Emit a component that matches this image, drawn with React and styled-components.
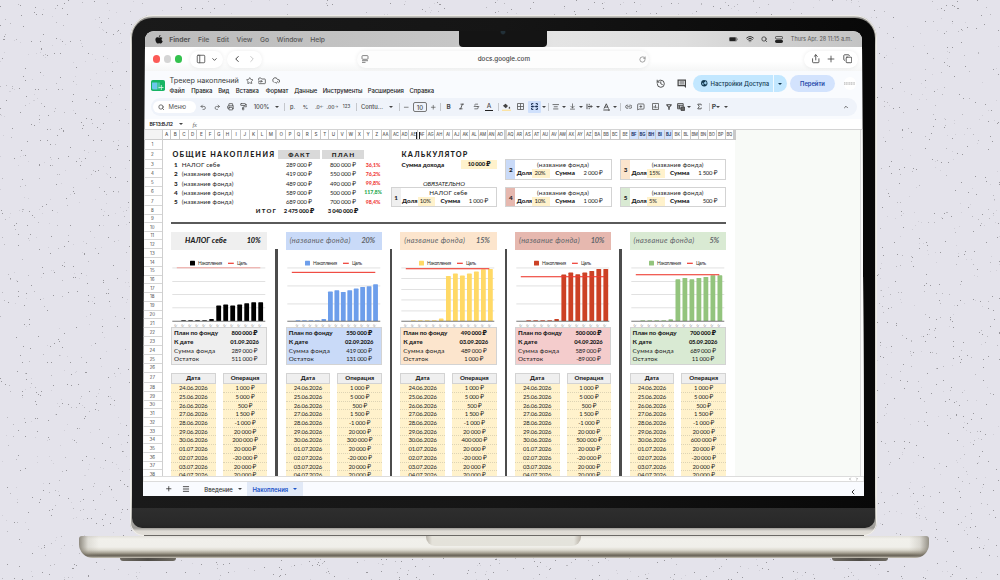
import React from "react";
import styled, { createGlobalStyle, css } from "styled-components";
import {
  Search, Undo2, Redo2, Printer, PaintRoller, Minus, Plus, Strikethrough, Italic,
  AlignCenter, ArrowDownToLine, Link2, MessageSquarePlus, Sigma,
  ChevronUp, ChevronDown, ChevronLeft, ChevronRight, Star, FolderInput, CloudCheck, History,
  PanelLeft, RotateCw, Share, Copy, Wifi, Menu,
} from "lucide-react";

const Global = createGlobalStyle`
  * { box-sizing: border-box; }
  html, body { margin: 0; width: 1000px; height: 580px; overflow: hidden; background: #e4e3eb; }
  svg { display: block; flex: none; }
`;

const UI = `Inter, "Liberation Sans", sans-serif`;
const SHEET = `Lato, Inter, sans-serif`;

/* ---------- backdrop and laptop ---------- */

const Stage = styled.main`
  position: relative;
  width: 1000px;
  height: 580px;
  padding-top: 15px;
  overflow: hidden;
  background: #e4e3eb;
  font-family: ${UI};
  color: #222;
`;

const Speckles = styled.svg`
  position: absolute;
  inset: 0;
`;

const Laptop = styled.div`
  position: relative;
  display: flex;
  flex-direction: column;
  align-items: center;
  width: 850px;
  margin-left: 78.5px;
`;

const Lid = styled.div`
  width: 747px;
  height: 521px;
  padding: 3px 2px 8px 2px;
  border-radius: 23px 23px 14px 14px;
  background: linear-gradient(180deg, #f3f2ee 0, #8d8c88 3px, #cfcdc7 30px, #dedcd6 480px, #9c9a96 513px, #dedbd5 516px, #e2dfd8 521px);
  box-shadow: inset 0 0 0 1px #f0eeea;
`;

const Bezel = styled.div`
  height: 510px;
  padding: 13px 11px 32px 11px;
  border-radius: 20px 20px 10px 10px;
  background:
    linear-gradient(180deg, transparent 489.5px, #2e2e2e 490px, #292929 506px, #242424 510px),
    linear-gradient(90deg, #1a1a1a, #151515 50%, #080808);
`;

const Screen = styled.div`
  display: flex;
  flex-direction: column;
  width: 721px;
  height: 465px;
  background: #fff;
  clip-path: path("M2 10 Q2 0 12 0 H709 Q719 0 719 10 L721 465 H0 Z");
`;

const Hinge = styled.div`
  width: 720px;
  height: 1px;
  margin-top: -1px;
  background: #6b6965;
`;

const Base = styled.div`
  position: relative;
  display: flex;
  justify-content: center;
  width: 850px;
  height: 21.5px;
  border-radius: 3px 3px 14px 14px;
  background:
    linear-gradient(90deg, rgba(110, 104, 92, 0.75), rgba(150, 144, 132, 0.2) 9px, transparent 20px, transparent 830px, rgba(150, 144, 132, 0.25) 841px, rgba(110, 104, 92, 0.7)),
    linear-gradient(180deg, #e2e0da 0, #f1f0eb 3px, #f0efea 11px, #dddad0 14px, #a5a092 17px, #716b5f 19px, #6b665b 20px, #b7b2a6 21.5px);
`;

const Scoop = styled.div`
  width: 155px;
  height: 10px;
  border-radius: 0 0 9px 9px;
  background: linear-gradient(90deg, #b8b3a9, #e4e2da 6px, #e4e3dc 148px, #b8b1a6);
`;

const Feet = styled.div`
  display: flex;
  justify-content: space-between;
  width: 768px;
`;

const Foot = styled.div`
  width: 56px;
  height: 3.3px;
  border-radius: 0 0 5px 5px;
  background: linear-gradient(90deg, #6e6a62, #4e4b46 50%, #6e6a62);
`;

const Gap = styled.i`
  flex: none;
  width: ${(p) => p.$w}px;
`;

/* ---------- mac menu bar ---------- */

const MacBar = styled.div`
  position: relative;
  display: flex;
  align-items: center;
  flex: none;
  height: 16px;
  padding: 0 12px;
  background: linear-gradient(90deg, #bcbcbc, #c6c6c6 43%, #e4e4e4 57%, #dedede 75%, #c3c3c3);
  font-size: 6.75px;
  color: #555;
`;

const MacItem = styled.span`
  flex: none;
  width: ${(p) => p.$w}px;
  font-weight: ${(p) => (p.$bold ? 700 : 500)};
  white-space: nowrap;
`;

const MacStatus = styled.div`
  display: flex;
  align-items: center;
  gap: 7.5px;
  margin-left: auto;
  font-size: 5.5px;
  white-space: nowrap;
`;

const Notch = styled.div`
  position: absolute;
  left: 316px;
  top: -1px;
  width: 88px;
  height: 16.5px;
  border-radius: 0 0 4px 4px;
  background: radial-gradient(circle at 44px 2px, #223038 1.6px, #141414 3px);
`;

/* ---------- browser bar ---------- */

const BrowserBar = styled.div`
  display: flex;
  align-items: center;
  flex: none;
  height: 24px;
  padding: 0 4px 0 9.5px;
  background: linear-gradient(180deg, #fff 60%, #f5f6f6);
`;

const Light = styled.i`
  width: 7.4px;
  height: 7.4px;
  margin-right: 3.9px;
  border-radius: 50%;
  background: ${(p) => p.$c};
`;

const Pill = styled.div`
  display: flex;
  align-items: center;
  justify-content: space-evenly;
  flex: none;
  width: ${(p) => p.$w}px;
  height: 17px;
  margin-left: ${(p) => p.$ml || 0}px;
  border-radius: 9px;
  background: #fff;
  box-shadow: 0 0 4px rgba(0, 0, 0, 0.08);
  color: #444;
`;

const Url = styled(Pill)`
  justify-content: space-between;
  padding: 0 3px 0 4px;
  font-size: 6.3px;
  font-weight: 500;
  background: #fdfdfd;
`;

/* ---------- document header ---------- */

const DocHeader = styled.header`
  display: flex;
  flex: none;
  height: 27px;
  padding: 0 8px;
  background: #f9fbfe;
`;

const DocLogo = styled.svg`
  margin-top: 8.5px;
`;

const Titles = styled.div`
  display: flex;
  flex-direction: column;
  margin-left: 4.5px;
  padding-top: 3.5px;
`;

const TitleRow = styled.div`
  display: flex;
  align-items: center;
  height: 12px;
  gap: 5.2px;
  color: #3c3c3c;
`;

const Title = styled.span`
  width: 70px;
  font-size: 7.25px;
  white-space: nowrap;
  margin-right: 1px;
`;

const DocMenu = styled.nav`
  display: flex;
  height: 7px;
  font-size: 5.9px;
  line-height: 7px;
  font-weight: 500;
  letter-spacing: -0.04px;
  color: #222;
`;

const DocMenuItem = styled.span`
  width: ${(p) => p.$w}px;
  white-space: nowrap;
`;

const HeaderActions = styled.div`
  display: flex;
  align-items: center;
  margin-left: auto;
  height: 25px;
  color: #444;
`;

const ShareButton = styled.div`
  display: flex;
  align-items: center;
  width: 94px;
  height: 17px;
  margin-left: 7px;
  padding-left: 8px;
  gap: 3px;
  border-radius: 9px;
  background: linear-gradient(90deg, #c2e7ff 79.6px, #f2faff 79.6px, #f2faff 80.6px, #c2e7ff 80.6px);
  color: #12384f;
  font-size: 5.95px;
  font-weight: 500;
  white-space: nowrap;
`;

const GoButton = styled.div`
  display: flex;
  align-items: center;
  justify-content: center;
  width: 45px;
  height: 17px;
  margin: 0 8.5px 0 3px;
  border-radius: 9px;
  background: #d3e3fd;
  color: #2347a8;
  font-size: 5.8px;
  font-weight: 600;
`;

const Avatar = styled.div`
  display: flex;
  align-items: center;
  justify-content: center;
  width: 12.5px;
  height: 12.5px;
  border-radius: 50%;
  background: #fff;
`;

/* ---------- toolbar ---------- */

const ToolbarWrap = styled.div`
  flex: none;
  height: 21px;
  padding: 0 7px 0 8px;
  background: #f9fbfe;
`;

const Toolbar = styled.div`
  display: flex;
  align-items: center;
  height: 17.5px;
  padding-left: 2px;
  border-radius: 9px;
  background: #eff3fa;
  color: #4a4a4a;
`;

const MenuSearch = styled.div`
  display: flex;
  align-items: center;
  flex: none;
  gap: 4px;
  width: 43px;
  height: 12.5px;
  padding-left: 5px;
  border-radius: 7px;
  background: #fff;
  font-size: 6px;
  color: #555;
`;

const Slot = styled.div`
  display: flex;
  align-items: center;
  justify-content: center;
  flex: none;
  width: ${(p) => p.$w}px;
  height: 12.5px;
  margin-left: ${(p) => (p.$end ? "auto" : 0)};
  font-size: ${(p) => p.$fs || 5.8}px;
  font-weight: ${(p) => (p.$b ? 700 : 500)};
  white-space: nowrap;
  border-radius: 1px;
  ${(p) => p.$on && css`background: #cfe0fc; color: #14315f;`}
`;

const Divider = styled.i`
  width: 0.7px;
  height: 8.5px;
  background: #c4c7cc;
`;

const Caret = styled.i`
  width: 0;
  height: 0;
  border: 2px solid transparent;
  border-top: 2px solid ${(p) => p.$c || "#444"};
  border-bottom: 0;
`;

const SizeBox = styled.div`
  width: 14.5px;
  height: 10.5px;
  border: 0.8px solid #777;
  border-radius: 2px;
  text-align: center;
  font-size: 6px;
  line-height: 9px;
`;

const Underlined = styled.span`
  border-bottom: 1.7px solid ${(p) => p.$c};
  padding: 0 1.8px;
  line-height: 7.5px;
`;

/* ---------- formula bar and sheet ---------- */

const FormulaBar = styled.div`
  display: flex;
  align-items: center;
  flex: none;
  height: 11.2px;
  padding-left: 6.5px;
  border-bottom: 0.8px solid #d4d4d4;
  background: #fff;
  font-size: 5.2px;
  font-weight: 600;
  letter-spacing: -0.25px;
  color: #222;
`;

const NameBox = styled.span`
  width: 29.5px;
`;

const Fx = styled.span`
  margin-left: 9.5px;
  font: italic 6.5px "Liberation Serif", serif;
  color: #666;
`;

const Sheet = styled.div`
  position: relative;
  display: flex;
  flex: none;
  height: 346.3px;
  overflow: hidden;
  background: linear-gradient(90deg, #fff 591.5px, #f8faf7 591.8px);
`;

const RowNumbers = styled.div`
  flex: none;
  width: 19.7px;
  border-right: 1px solid #cfcfcf;
`;

const Corner = styled.div`
  height: 9.8px;
  background: #f4f4f4;
  border-bottom: 1px solid #ccc;
`;

const RowNumber = styled.div`
  display: flex;
  align-items: center;
  justify-content: center;
  height: ${(p) => p.$h}px;
  padding-top: 0.6px;
  border-bottom: 0.7px solid #d6d6d6;
  font-size: 4.4px;
  color: #444;
`;

const SheetBody = styled.div`
  width: 573px;
`;

const Letters = styled.div`
  display: flex;
  height: 9.8px;
  border-bottom: 1px solid #c6c6c6;
  background: #c9c9c9;
`;

const LetterGroup = styled.div`
  display: flex;
  flex: none;
  width: 114.65px;
  padding-right: 1.7px;
  background: #d5d5d5;
  &:last-child { width: 113px; padding-right: 0; }
`;

const Letter = styled.div`
  flex: none;
  width: 8.69px;
  border-right: 0.8px solid #c9c9c9;
  background: ${(p) => (p.$on ? "#d3e3fd" : "#fff")};
  color: ${(p) => (p.$on ? "#14315f" : "#555")};
  font-size: ${(p) => (p.$two ? 4.2 : 4.6)}px;
  font-weight: ${(p) => (p.$on ? 700 : 500)};
  line-height: 9.8px;
  text-align: center;
  letter-spacing: -0.1px;
  overflow: hidden;
`;

const ColumnHandle = styled.div`
  position: absolute;
  left: 273px;
  top: 1.5px;
  width: 4px;
  height: 7px;
  border: solid #222;
  border-width: 0 1px;
`;

const Content = styled.div`
  display: flex;
  flex-direction: column;
  height: 336.5px;
  padding-left: 8.3px;
  font-family: ${SHEET};
  font-size: 6.3px;
  color: #1d1d1d;
  white-space: nowrap;
`;

const TopBlock = styled.div`
  display: flex;
  flex: none;
  height: 84.2px;
  width: 555.5px;
  padding-top: 9.7px;
  border-bottom: 2px solid #5a5a5a;
`;

const Num = styled.span`
  font-size: 5.9px;
  letter-spacing: -0.18px;
  word-spacing: -0.15px;
`;

const Summary = styled.div`
  width: 220px;
`;

const SummaryRow = styled.div`
  display: grid;
  grid-template-columns: 107px 42px 2px 42px 18px;
  align-items: center;
  height: ${(p) => p.$h || 9.25}px;
  padding-top: ${(p) => (p.$h ? 0 : 0.8)}px;
  text-align: center;
  font-weight: ${(p) => (p.$bold ? 900 : 400)};
`;

const Heading = styled.span`
  padding-left: 1.5px;
  font-size: 7.2px;
  font-weight: 900;
  letter-spacing: ${(p) => p.$ls}px;
  text-align: left;
`;

const HeadCell = styled.span`
  height: 9.3px;
  padding-left: 1px;
  background: #d9d9d9;
  font-size: 6.4px;
  line-height: 9.3px;
  font-weight: 900;
  letter-spacing: 1.1px;
`;

const FundName = styled.span`
  padding-left: 3px;
  text-align: left;
  letter-spacing: 0.14px;
  b { display: inline-block; width: 7.7px; font-weight: 900; }
`;

const TotalLabel = styled.span`
  text-align: right;
  padding-right: 1px;
  font-size: 6.1px;
  letter-spacing: 1.15px;
  font-weight: 900;
`;

const Percent = styled.span`
  font-size: 5.3px;
  font-weight: 900;
  letter-spacing: -0.05px;
  color: ${(p) => (p.$up ? "#1fa84f" : "#f03a36")};
`;

const Calculator = styled.div`
  width: 106.5px;
  margin-left: 0.4px;
`;

const CalcHead = styled.div`
  height: 10px;
  padding-left: 9.5px;
  line-height: 10px;
`;

const Income = styled.div`
  display: flex;
  align-items: center;
  justify-content: space-between;
  height: 9.9px;
  padding-left: 11px;
  font-weight: 900;
`;

const IncomeValue = styled(Num)`
  width: 36px;
  height: 8.5px;
  line-height: 8.5px;
  text-align: center;
  background: #fff2cc;
`;

const Required = styled.div`
  height: 17.3px;
  padding-top: 9px;
  line-height: 9px;
  text-align: center;
  font-style: italic;
  letter-spacing: -0.1px;
`;

const ShareCard = styled.div`
  display: grid;
  grid-template-columns: 9px 1fr;
  width: 106.5px;
  height: 20.5px;
  border: 1.2px solid #d3d3d3;
  background: #fff;
`;

const CardNumber = styled.div`
  display: flex;
  align-items: center;
  justify-content: center;
  background: ${(p) => p.$c};
  font-weight: 900;
`;

const CardTop = styled.div`
  height: 9.3px;
  line-height: 9.9px;
  text-align: center;
  letter-spacing: 0.14px;
`;

const CardLine = styled.div`
  display: flex;
  height: 8.8px;
  line-height: 8.8px;
  padding-left: 1.5px;
  b { font-weight: 900; }
`;

const ShareLabel = styled.b`
  width: 15.6px;
  letter-spacing: -0.1px;
`;

const CardShare = styled(Num)`
  width: 17.5px;
  margin-right: 5.3px;
  padding-left: 2px;
  background: #fff2cc;
`;

const CardSum = styled(Num)`
  margin-left: auto;
  padding-right: 8px;
`;

const Cards = styled.div`
  display: grid;
  grid-template-columns: 106.5px 106.5px;
  grid-auto-rows: 20.5px;
  gap: 7.2px 8.2px;
  align-content: start;
  padding: 9.5px 0 0 8.2px;
`;

const Funds = styled.div`
  display: flex;
  flex: none;
  padding-top: 7.5px;
`;

const Fund = styled.section`
  position: relative;
  display: flex;
  flex-direction: column;
  flex: none;
  width: 114.65px;
  padding-right: 18.25px;
`;

const FundTitle = styled.div`
  display: flex;
  align-items: center;
  justify-content: space-between;
  flex: none;
  height: 18px;
  padding: 0 7px 0 ${(p) => (p.$bold ? 14 : 4)}px;
  background: ${(p) => p.$c};
  font-size: 7.4px;
  font-style: italic;
  font-weight: ${(p) => (p.$bold ? 900 : 400)};
  letter-spacing: ${(p) => (p.$bold ? 0.08 : 0.32)}px;
  color: ${(p) => (p.$bold ? "#1d1d1d" : "#62656a")};
  b { font-weight: ${(p) => (p.$bold ? 900 : 700)}; letter-spacing: -0.2px; }
`;

const FundRule = styled.div`
  position: absolute;
  right: 8px;
  top: 17.5px;
  width: 2.2px;
  height: 230px;
  background: #4c4c4c;
`;

const ChartSvg = styled.svg`
  width: 96.4px;
  height: 77.7px;
`;

const PlanBox = styled.div`
  flex: none;
  height: 38px;
  padding: 0.6px 0 0 2px;
  border: 1.1px solid #d3d3d3;
  background: ${(p) => p.$c};
`;

const PlanRow = styled.div`
  display: grid;
  grid-template-columns: 47px 47px;
  height: 8.85px;
  line-height: 8.85px;
  font-weight: ${(p) => (p.$bold ? 900 : 400)};
  letter-spacing: ${(p) => (p.$bold ? -0.05 : 0.16)}px;
`;

const PlanValue = styled(Num)`
  text-align: center;
`;

const Ledger = styled.div`
  display: grid;
  grid-template-columns: 44.6px 44.6px;
  justify-content: space-between;
  padding-top: 8px;
`;

const LedgerHead = styled.div`
  height: 10.8px;
  border: 1.1px solid #d3d3d3;
  background: #efefef;
  font-size: 6.1px;
  font-weight: 900;
  line-height: 8.8px;
  text-align: center;
`;

const LedgerCell = styled(Num)`
  height: 8.72px;
  line-height: 8.9px;
  border-bottom: 0.6px dotted #ddd3b4;
  background: #fff2cc;
  text-align: center;
`;

const SideScroll = styled.div`
  position: absolute;
  right: 0;
  top: 0;
  width: 4.5px;
  height: 100%;
  border-left: 0.8px solid #dcdcdc;
  background: #fafafa;
`;

const BottomScroll = styled.div`
  display: flex;
  justify-content: flex-end;
  gap: 3px;
  flex: none;
  height: 5.8px;
  padding-right: 5px;
  border: solid #dcdcdc;
  border-width: 1px 0 0.8px;
  color: #888;
`;

const Tabs = styled.footer`
  display: flex;
  align-items: center;
  flex: 1;
  background: #f9fbff;
  font-size: 5.9px;
  font-weight: 500;
  color: #333;
`;

const Tab = styled.div`
  display: flex;
  align-items: center;
  justify-content: center;
  gap: 5px;
  width: ${(p) => p.$w}px;
  height: 100%;
  white-space: nowrap;
  ${(p) => p.$on && css`background: #e1e9f7; color: #1a52c8; font-weight: 600;`}
`;

const TabsToggle = styled(ChevronLeft)`
  margin: 5px 7px 0 auto;
`;

/* ---------- data ---------- */

const ROW_HEIGHTS = [
  9.7, 10, 9.2, 9.2, 9.2, 9.2, 9.6, 8.6, 8.6, 8.4, 8.6, 9, 8.7, 8.7, 9, 8.6, 8.7, 8.7, 9, 8.6, 8.7, 9, 9, 9, 9, 8.7, 10.8,
  8.72, 8.72, 8.72, 8.72, 8.72, 8.72, 8.72, 8.72, 8.72, 8.72, 8.72,
];

const LETTERS = [
  "A B C D E F G H I J K L M",
  "O P Q R S T U V W X Y Z AA",
  "AC AD AE AF AG AH AI AJ AK AL AM AN AO",
  "AQ AR AS AT AU AV AW AX AY AZ BA BB BC",
  "BE BF BG BH BI BJ BK BL BM BN BO BP BQ",
].map((g) => g.split(" "));
const SELECTED = ["BF", "BG", "BH", "BI", "BJ"];

const NAME = "(название фонда)";

const FUNDS = [
  {
    name: "НАЛОГ себе", share: "10%", plan: "800 000 ₽", date: "01.09.2026", sum: "289 000 ₽", left: "511 000 ₽", pct: "36,1%", big: "200 000 ₽",
    head: "#efefef", box: "#efefef", bar: "#000", grid: [17.6, 31, 44, 57.5], goal: 18, thin: true,
    x0: 45.3, pitch: 7, tops: [55.6, 54.6, 55.6, 54.6, 53.3, 52.3, 52.3], dot: 69,
  },
  {
    name: NAME, share: "20%", plan: "550 000 ₽", date: "02.09.2026", sum: "419 000 ₽", left: "131 000 ₽", pct: "76,2%", big: "300 000 ₽",
    head: "#c9daf8", box: "#c9daf8", bar: "#6d9eeb", grid: [17.6, 35.6, 53.6], goal: 22.3,
    x0: 42, pitch: 6.45, tops: [41.6, 40.3, 42, 40.3, 38.6, 37, 36.3, 34.3], dot: 69,
  },
  {
    name: NAME, share: "15%", plan: "490 000 ₽", date: "03.09.2026", sum: "489 000 ₽", left: "1 000 ₽", pct: "99,8%", big: "400 000 ₽",
    head: "#fce5cd", box: "#fce5cd", bar: "#ffd966", grid: [17.6, 28.3, 39, 49.6, 60.6], goal: 18.6,
    x0: 46, pitch: 7, tops: [26, 23.6, 25.6, 23.6, 21.6, 19.3, 19], dot: 68.6,
  },
  {
    name: NAME, share: "10%", plan: "500 000 ₽", date: "04.09.2026", sum: "589 000 ₽", left: "-89 000 ₽", pct: "117,8%", big: "500 000 ₽",
    head: "#e6b8af", box: "#f4cccc", bar: "#cc4125", grid: [17.6, 35.6, 53.6], goal: 26.6,
    x0: 46.4, pitch: 7, tops: [24.6, 22.6, 24.3, 22.6, 21, 19, 19], dot: 69,
  },
  {
    name: NAME, share: "5%", plan: "700 000 ₽", date: "05.09.2026", sum: "689 000 ₽", left: "11 000 ₽", pct: "98,4%", big: "600 000 ₽",
    head: "#d9ead3", box: "#d9ead3", bar: "#93c47d", grid: [17.6, 31, 44, 57.5], goal: 24.6,
    x0: 45.5, pitch: 7, tops: [29.3, 28, 29.3, 28, 27, 25.3, 25.3], dot: 69.3,
  },
];

const OPERATIONS = [
  ["24.06.2026", "1 000 ₽"], ["25.06.2026", "5 000 ₽"], ["26.06.2026", "500 ₽"], ["27.06.2026", "1 500 ₽"],
  ["28.06.2026", "-1 000 ₽"], ["29.06.2026", "20 000 ₽"], ["30.06.2026", null], ["01.07.2026", "20 000 ₽"],
  ["02.07.2026", "-20 000 ₽"], ["03.07.2026", "20 000 ₽"], ["04.07.2026", "20 000 ₽"],
];

const CARDS = [
  { n: 2, name: NAME, share: "20%", sum: "2 000 ₽", c: "#c9daf8" },
  { n: 3, name: NAME, share: "15%", sum: "1 500 ₽", c: "#fce5cd" },
  { n: 4, name: NAME, share: "10%", sum: "1 000 ₽", c: "#e6b8af" },
  { n: 5, name: NAME, share: "5%", sum: "500 ₽", c: "#d9ead3" },
];

/* Deterministic speckle pattern split into a few tones. */
function speckle(count, seed) {
  let s = seed;
  const next = () => {
    s = (s * 1664525 + 1013904223) % 4294967296;
    return s / 4294967296;
  };
  let d = "";
  for (let i = 0; i < count; i++) d += `M${Math.floor(next() * 1000)} ${Math.floor(next() * 580)}h1v1h-1z`;
  return d;
}
const DOTS = [
  ["#99989d", speckle(2300, 11)],
  ["#b9b8be", speckle(1500, 77)],
  ["#d0cfd7", speckle(1500, 303)],
];

/* ---------- parts ---------- */

function Chart({ f }) {
  const count = f.tops.length;
  const small = f.x0 - f.pitch;
  return (
    <ChartSvg viewBox="0 0 96.4 77.7">
      <rect x="19" y="10.8" width="5" height="4.8" rx="0.5" fill={f.bar} />
      <text x="27" y="15" fontSize="4.8" fill="#333" textLength="24">Накопления</text>
      <rect x="57" y="12.7" width="5.8" height="1.2" fill="#ee3a30" />
      <text x="66" y="15" fontSize="4.8" fill="#333" textLength="10">Цель</text>
      {f.grid.map((y) => <rect key={y} x="1.3" y={y} width="93" height="0.7" fill="#d4d4d4" />)}
      {f.tops.map((t, i) => (
        <rect key={i} x={f.x0 + i * f.pitch} y={t} width="4.8" height={71 - t} rx="0.6" fill={f.bar} />
      ))}
      <rect x={small} y={f.dot} width="4.5" height={71 - f.dot} rx="0.6" fill={f.bar} />
      {[2, 3, 4, 5].map((k) => (
        <rect key={k} x={f.x0 - k * f.pitch} y="70.3" width="4.5" height="0.7" fill={f.bar} />
      ))}
      <rect x="1.3" y="70.8" width="93" height="0.8" fill="#555" />
      <rect x="5.8" y={f.goal - 0.5} width="83.5" height={f.thin ? 0.7 : 1.2} fill="#ee3a30" opacity={f.thin ? 0.6 : 0.9} />
      {Array.from({ length: 13 }, (_, i) => {
        const x = f.x0 + (count - 1 - i) * f.pitch + 1.2;
        return x > 2 ? <text key={i} fontSize="3" fill="#555" transform={`translate(${x} 77) rotate(-45)`}>0..</text> : null;
      })}
    </ChartSvg>
  );
}

function Card({ n, name, share, sum, c }) {
  return (
    <ShareCard>
      <CardNumber $c={c}>{n}</CardNumber>
      <div>
        <CardTop>{name}</CardTop>
        <CardLine>
          <ShareLabel>Доля</ShareLabel>
          <CardShare>{share}</CardShare>
          <b>Сумма</b>
          <CardSum>{sum}</CardSum>
        </CardLine>
      </div>
    </ShareCard>
  );
}

const Sep = ({ w }) => <Slot $w={w}><Divider /></Slot>;
const Drop = ({ w }) => <Slot $w={w}><Caret /></Slot>;

function Tools() {
  const i = { size: 7.5, strokeWidth: 2.4 };
  return (
    <Toolbar>
      <MenuSearch><Search size={6.5} strokeWidth={3} />Меню</MenuSearch>
      <Slot $w={14}><Undo2 {...i} size={6.5} /></Slot>
      <Slot $w={14}><Redo2 {...i} size={6.5} /></Slot>
      <Slot $w={12.5}><Printer {...i} /></Slot>
      <Slot $w={13.5}><PaintRoller {...i} /></Slot>
      <Slot $w={23}>100%</Slot>
      <Drop w={7} />
      <Sep w={8} />
      <Slot $w={9} $fs={5.6}>р.</Slot>
      <Slot $w={17} $fs={5.4}>%</Slot>
      <Slot $w={11} $fs={5}>.0<sub>←</sub></Slot>
      <Slot $w={15} $fs={5}>.00<sub>→</sub></Slot>
      <Slot $w={13} $fs={4.4}>123</Slot>
      <Sep w={6} />
      <Slot $w={26}>Contu...</Slot>
      <Drop w={12} />
      <Sep w={5} />
      <Slot $w={9}><Minus {...i} size={6.5} /></Slot>
      <Slot $w={18}><SizeBox>10</SizeBox></Slot>
      <Slot $w={8}><Plus {...i} size={6.5} /></Slot>
      <Sep w={7} />
      <Slot $w={9} $b $fs={6.4}>B</Slot>
      <Slot $w={17}><Italic {...i} size={7} strokeWidth={3} /></Slot>
      <Slot $w={12}><Strikethrough {...i} size={7} /></Slot>
      <Slot $w={14} $fs={6.4}><Underlined $c="#222">A</Underlined></Slot>
      <Sep w={4} />
      <Slot $w={13}>
        <svg width="9" height="9" viewBox="0 0 9 9">
          <path d="M2.6.8 6 4.1 3.8 6.3.9 3.7 3.6 1.8zM7.3 4.4c.6.9.9 1.2.9 1.6a.8.8 0 0 1-1.6 0c0-.4.3-.8.7-1.6z" fill="#444" />
          <rect y="7.6" width="9" height="1.4" fill="#fbe3a4" />
        </svg>
      </Slot>
      <Slot $w={15}>
        <svg width="7" height="7" viewBox="0 0 7 7" fill="none" stroke="#555" strokeWidth=".8"><path d="M.5.5h6v6h-6zM3.5.5v6M.5 3.5h6" /></svg>
      </Slot>
      <Slot $w={13} $on>
        <svg width="7" height="7" viewBox="0 0 7 7" fill="none" stroke="#1a2f52" strokeWidth="1"><path d="M2.3.6H.6v1.6M.6 4.8v1.6h1.7M4.7.6h1.7v1.6M6.4 4.8v1.6H4.7M0 3.5h2.6M7 3.5H4.4M1.8 2.5l1 1-1 1M5.2 2.5l-1 1 1 1" /></svg>
      </Slot>
      <Drop w={5} />
      <Sep w={4} />
      <Slot $w={11}><AlignCenter {...i} size={7.5} /></Slot>
      <Drop w={5} />
      <Slot $w={13}><ArrowDownToLine {...i} size={7} /></Slot>
      <Drop w={4} />
      <Slot $w={12}>
        <svg width="7" height="7" viewBox="0 0 7 7" fill="none" stroke="#444" strokeWidth=".9"><path d="M1 .8v5.4M3.2.8v1.6M3.2 4.6v1.6M2 3.5h4M4.8 2.2l1.3 1.3-1.3 1.3" /></svg>
      </Slot>
      <Drop w={5} />
      <Slot $w={13}>
        <svg width="7" height="8" viewBox="0 0 7 8" fill="none" stroke="#444" strokeWidth=".9"><path d="M1 5.6 3.3.8l2.2 4.8M1.8 4.1h3M.3 7h6M5.5 6l1 1-1 1" /></svg>
      </Slot>
      <Drop w={4} />
      <Sep w={6} />
      <Slot $w={11}><Link2 {...i} /></Slot>
      <Slot $w={14}><MessageSquarePlus {...i} size={7.7} /></Slot>
      <Slot $w={14}>
        <svg width="7" height="7" viewBox="0 0 7 7" fill="none" stroke="#555" strokeWidth=".8"><path d="M.5.5h6v6h-6zM2.1 5.2V3M3.5 5.2V1.8M4.9 5.2V3.8" /></svg>
      </Slot>
      <Slot $w={13}><svg width="6" height="6" viewBox="0 0 6 6"><path d="M.3.3h5.4v.9L3.7 3.5v2.3H2.3V3.500L.3 1.200zM1.600 1.200 3 2.800l1.400-1.600z" fill="#444" fillRule="evenodd" /></svg></Slot>
      <Slot $w={12}>
        <svg width="8" height="8" viewBox="0 0 8 8" fill="none" stroke="#444" strokeWidth=".9"><path d="M.6.6h5.600v5.200H.6zM.6 2.300h5.600M.6 4h3M2.400 2.300v3.500" /><path d="M4 4h3.600v3.400H4z" fill="#666" /></svg>
      </Slot>
      <Drop w={4} />
      <Slot $w={17}><Sigma {...i} size={7} strokeWidth={3} /></Slot>
      <Sep w={2} />
      <Slot $w={12} $b $fs={6.8}>P<Caret /></Slot>
      <Drop w={7} />
      <Slot $w={22} $end><ChevronUp {...i} size={6} strokeWidth={3.2} /></Slot>
    </Toolbar>
  );
}

export default function App() {
  const s = { size: 7.5, strokeWidth: 2.2 };
  return (
    <Stage>
      <Global />
      <Speckles width="1000" height="580" shapeRendering="crispEdges">
        {DOTS.map(([c, d]) => <path key={c} d={d} fill={c} />)}
      </Speckles>
      <Laptop>
        <Lid>
          <Bezel>
            <Screen>
              <MacBar>
                <svg width="8" height="9" viewBox="0 0 16 18" fill="#161616"><path d="M11 0c.1 1.800-1.300 3.700-3.200 3.800C7.600 2 9.200.2 11 0zM14.800 6.100c-2.500 1.500-2.200 5 .6 6.300-.7 2-2.200 4.700-3.800 4.700-1.200 0-1.600-.8-3.100-.8s-2 .8-3.100.8C2.800 17.200-1.600 8.500 2.400 5.300c1.500-1.200 3.100-1 4.300-.5 1.200.6 1.700.5 2.900 0 1.700-.7 3.900-.5 5.200 1.300z" /></svg>
                <Gap $w={6.3} />
                <MacItem $w={28.7} $bold>Finder</MacItem>
                <MacItem $w={18.8}>File</MacItem>
                <MacItem $w={19.7}>Edit</MacItem>
                <MacItem $w={23.5}>View</MacItem>
                <MacItem $w={16.7}>Go</MacItem>
                <MacItem $w={33.5}>Window</MacItem>
                <MacItem $w={20}>Help</MacItem>
                <MacStatus>
                  <svg width="9" height="5" viewBox="0 0 9 5"><rect width="8" height="4.600" rx="1.300" fill="#888" /><rect x=".6" y=".6" width="6" height="3.400" rx=".8" fill="#222" /><rect x="8.300" y="1.500" width=".7" height="1.600" fill="#777" /></svg>
                  <Wifi size={8} strokeWidth={3} color="#333" />
                  <Search size={6.5} strokeWidth={2.8} color="#333" />
                  <svg width="8" height="7" viewBox="0 0 8 7"><rect x=".4" y=".4" width="7.200" height="2.600" rx="1.300" fill="none" stroke="#333" strokeWidth=".8" /><rect y="3.700" width="8" height="3.200" rx="1.600" fill="#222" /></svg>
                  <span>Thurs Apr. 28 11:15 a.m.</span>
                </MacStatus>
                <Notch />
              </MacBar>
              <BrowserBar>
                <Light $c="#fc5b57" /><Light $c="#d5d5d5" /><Light $c="#34c24e" />
                <Pill $w={33} $ml={4}>
                  <PanelLeft size={10} strokeWidth={1.9} />
                  <ChevronDown size={7} strokeWidth={3} />
                </Pill>
                <Pill $w={35} $ml={3.5}>
                  <ChevronLeft size={10} strokeWidth={2.4} />
                  <ChevronRight size={10} strokeWidth={2} color="#bbb" />
                </Pill>
                <Url $w={292} $ml={95}>
                  <svg width="8" height="8" viewBox="0 0 8 8" fill="none" stroke="#666" strokeWidth=".8"><rect x="1" y=".6" width="6" height="3.700" rx=".8" /><path d="M1 5.700h6M1 7.400h3.500" /></svg>
                  docs.google.com
                  <RotateCw size={7} strokeWidth={2} color="#666" />
                </Url>
                <Pill $w={54} $ml={155.5}>
                  <Share size={9.5} strokeWidth={2.2} />
                  <Plus size={10} strokeWidth={2} />
                  <Copy size={9.5} strokeWidth={2.2} />
                </Pill>
              </BrowserBar>
              <DocHeader>
                <DocLogo width="14" height="11" viewBox="0 0 14 11">
                  <rect width="14" height="11" rx="1.800" fill="#17b463" />
                  <path d="M1 2.500h5v7H2.500A1.500 1.500 0 0 1 1 8z" fill="#6cc7ec" />
                  <path d="M6 2.500h3v7H6z" fill="#45c5a0" />
                  <path d="M7.500 7.500h5M10.300 5v5" stroke="#dff7e8" strokeWidth=".8" />
                </DocLogo>
                <Titles>
                  <TitleRow>
                    <Title>Трекер накоплений</Title>
                    <Star {...s} /><FolderInput {...s} size={8} /><CloudCheck {...s} size={8.5} />
                  </TitleRow>
                  <DocMenu>
                    <DocMenuItem $w={21.7}>Файл</DocMenuItem>
                    <DocMenuItem $w={27}>Правка</DocMenuItem>
                    <DocMenuItem $w={17.5}>Вид</DocMenuItem>
                    <DocMenuItem $w={30}>Вставка</DocMenuItem>
                    <DocMenuItem $w={28.5}>Формат</DocMenuItem>
                    <DocMenuItem $w={28.5}>Данные</DocMenuItem>
                    <DocMenuItem $w={45}>Инструменты</DocMenuItem>
                    <DocMenuItem $w={41.8}>Расширения</DocMenuItem>
                    <DocMenuItem $w={25}>Справка</DocMenuItem>
                  </DocMenu>
                </Titles>
                <HeaderActions>
                  <History size={9.5} strokeWidth={2.3} />
                  <Gap $w={11} />
                  <svg width="9.500" height="9.500" viewBox="0 0 19 19"><path d="M1 1h17v17l-3.500-3.500H1zM3.500 3.500v8.500h12V3.500z" fill="#444" fillRule="evenodd" /><path d="M5 5.500h9M5 7.800h9M5 10.100h9" stroke="#444" strokeWidth="1.300" /></svg>
                  <ShareButton>
                    <svg width="6.500" height="6.500" viewBox="0 0 13 13"><circle cx="6.500" cy="6.500" r="6.300" fill="#12384f" /><path d="M2 5l3 3v2.500C3 10 1.700 8 2 5zM6 1.500h3L8 4 6 5 5 7l4 1 .5 2c2-2 2.500-5 .5-7L8.500 2z" fill="#9fd0ee" /></svg>
                    Настройки Доступа
                    <Slot $w={16}><Caret $c="#12384f" /></Slot>
                  </ShareButton>
                  <GoButton>Перейти</GoButton>
                  <Avatar><svg width="11" height="3" viewBox="0 0 11 3"><path d="M0 .8h11M0 2.200h11" stroke="#999" strokeWidth=".7" strokeDasharray="1.200 .5" /></svg></Avatar>
                </HeaderActions>
              </DocHeader>
              <ToolbarWrap><Tools /></ToolbarWrap>
              <FormulaBar>
                <NameBox>BF13:BJ12</NameBox>
                <Caret />
                <Fx>fx</Fx>
              </FormulaBar>
              <Sheet>
                <RowNumbers>
                  <Corner />
                  {ROW_HEIGHTS.map((h, i) => <RowNumber key={i} $h={h}>{i + 1}</RowNumber>)}
                </RowNumbers>
                <SheetBody>
                  <Letters>
                    {LETTERS.map((g, i) => (
                      <LetterGroup key={i}>
                        {g.map((l) => <Letter key={l} $two={l.length > 1} $on={SELECTED.includes(l)}>{l}</Letter>)}
                      </LetterGroup>
                    ))}
                  </Letters>
                  <Content>
                    <TopBlock>
                      <Summary>
                        <SummaryRow $h={10}>
                          <Heading $ls={1.3}>ОБЩИЕ НАКОПЛЕНИЯ</Heading>
                          <HeadCell>ФАКТ</HeadCell><i /><HeadCell>ПЛАН</HeadCell>
                        </SummaryRow>
                        {FUNDS.map((f, i) => (
                          <SummaryRow key={i}>
                            <FundName><b>{i + 1}</b>{f.name}</FundName>
                            <Num>{f.sum}</Num><i /><Num>{f.plan}</Num>
                            <Percent $up={i === 3}>{f.pct}</Percent>
                          </SummaryRow>
                        ))}
                        <SummaryRow $h={9} $bold>
                          <TotalLabel>ИТОГ</TotalLabel>
                          <Num>2 475 000 ₽</Num><i /><Num>3 040 000 ₽</Num>
                        </SummaryRow>
                      </Summary>
                      <Calculator>
                        <CalcHead><Heading $ls={1.15}>КАЛЬКУЛЯТОР</Heading></CalcHead>
                        <Income>Сумма дохода<IncomeValue>10 000 ₽</IncomeValue></Income>
                        <Required>ОБЯЗАТЕЛЬНО</Required>
                        <Card n={1} name="НАЛОГ себе" share="10%" sum="1 000 ₽" c="#efefef" />
                      </Calculator>
                      <Cards>{CARDS.map((c) => <Card key={c.n} {...c} />)}</Cards>
                    </TopBlock>
                    <Funds>
                      {FUNDS.map((f, i) => (
                        <Fund key={i}>
                          <FundTitle $c={f.head} $bold={i === 0}><span>{f.name}</span><b>{f.share}</b></FundTitle>
                          <Chart f={f} />
                          <PlanBox $c={f.box}>
                            <PlanRow $bold><span>План по фонду</span><PlanValue>{f.plan}</PlanValue></PlanRow>
                            <PlanRow $bold><span>К дате</span><PlanValue>{f.date}</PlanValue></PlanRow>
                            <PlanRow><span>Сумма фонда</span><PlanValue>{f.sum}</PlanValue></PlanRow>
                            <PlanRow><span>Остаток</span><PlanValue>{f.left}</PlanValue></PlanRow>
                          </PlanBox>
                          <Ledger>
                            <LedgerHead>Дата</LedgerHead><LedgerHead>Операция</LedgerHead>
                            {OPERATIONS.map(([d, v]) => (
                              <React.Fragment key={d}>
                                <LedgerCell>{d}</LedgerCell><LedgerCell>{v || f.big}</LedgerCell>
                              </React.Fragment>
                            ))}
                          </Ledger>
                          {i < 4 && <FundRule />}
                        </Fund>
                      ))}
                    </Funds>
                  </Content>
                </SheetBody>
                <ColumnHandle />
                <SideScroll />
              </Sheet>
              <BottomScroll><ChevronLeft size={4} strokeWidth={4} /><ChevronRight size={4} strokeWidth={4} /></BottomScroll>
              <Tabs>
                <Gap $w={22} />
                <Plus size={7.5} strokeWidth={2.6} />
                <Gap $w={9.5} />
                <Menu size={8} strokeWidth={2.6} />
                <Gap $w={9} />
                <Tab $w={48}>Введение<Caret /></Tab>
                <Tab $w={55.5} $on>Накопления<Caret $c="#1a52c8" /></Tab>
                <TabsToggle size={8} strokeWidth={3} />
              </Tabs>
            </Screen>
          </Bezel>
        </Lid>
        <Hinge />
        <Base><Scoop /></Base>
        <Feet><Foot /><Foot /></Feet>
      </Laptop>
    </Stage>
  );
}
